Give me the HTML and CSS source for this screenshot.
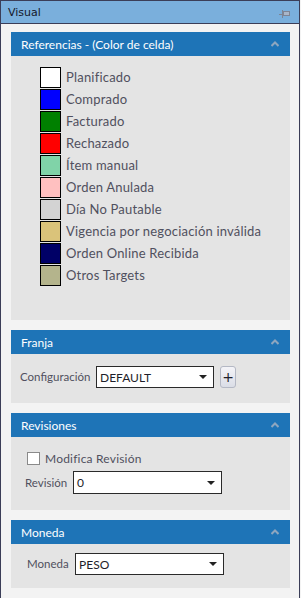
FILE: index.html
```html
<!DOCTYPE html>
<html lang="es">
<head>
  <meta charset="UTF-8">
  <title>Visual</title>
  <link rel="stylesheet" href="styles.css">
</head>
<body>
  <div class="window">
    <div class="titlebar">
      <span>Visual</span>
      <svg class="pin" width="11" height="8" viewBox="0 0 11 8">
        <rect x="0" y="4" width="3" height="1" fill="#7d8494"/>
        <rect x="3" y="0" width="1" height="8" fill="#7d8494"/>
        <rect x="4.5" y="1.5" width="6" height="4" fill="#a9b6c8" stroke="#7d8494" stroke-width="1"/>
      </svg>
    </div>

    <div class="content">
      <section class="panel">
        <div class="panel-head">
          <span>Referencias - (Color de celda)</span>
          <svg class="chev" width="8" height="6" viewBox="0 0 8 6"><path d="M0.5 5 L4 1.5 L7.5 5" fill="none" stroke="#8ea6bf" stroke-width="2"/></svg>
        </div>
        <div class="panel-body legend">
          <div class="item"><span class="sw" style="background:#ffffff"></span>Planificado</div>
          <div class="item"><span class="sw" style="background:#0000ff"></span>Comprado</div>
          <div class="item"><span class="sw" style="background:#008000"></span>Facturado</div>
          <div class="item"><span class="sw" style="background:#ff0000"></span>Rechazado</div>
          <div class="item"><span class="sw" style="background:#80d3a8"></span>Ítem manual</div>
          <div class="item"><span class="sw" style="background:#ffc0c0"></span>Orden Anulada</div>
          <div class="item"><span class="sw" style="background:#d3d3d3"></span>Día No Pautable</div>
          <div class="item"><span class="sw" style="background:#dac37a"></span>Vigencia por negociación inválida</div>
          <div class="item"><span class="sw" style="background:#000066"></span>Orden Online Recibida</div>
          <div class="item"><span class="sw" style="background:#b4b48c"></span>Otros Targets</div>
        </div>
      </section>

      <section class="panel">
        <div class="panel-head">
          <span>Franja</span>
          <svg class="chev" width="8" height="6" viewBox="0 0 8 6"><path d="M0.5 5 L4 1.5 L7.5 5" fill="none" stroke="#8ea6bf" stroke-width="2"/></svg>
        </div>
        <div class="panel-body franja">
          <label class="lbl lbl-config">Configuración</label>
          <div class="select sel-config"><span>DEFAULT</span><i class="caret"></i></div>
          <button class="plus">+</button>
        </div>
      </section>

      <section class="panel">
        <div class="panel-head">
          <span>Revisiones</span>
          <svg class="chev" width="8" height="6" viewBox="0 0 8 6"><path d="M0.5 5 L4 1.5 L7.5 5" fill="none" stroke="#8ea6bf" stroke-width="2"/></svg>
        </div>
        <div class="panel-body revisiones">
          <div class="check-row"><span class="checkbox"></span>Modifica Revisión</div>
          <div class="field-row">
            <label class="lbl lbl-rev">Revisión</label>
            <div class="select sel-rev"><span>0</span><i class="caret"></i></div>
          </div>
        </div>
      </section>

      <section class="panel">
        <div class="panel-head">
          <span>Moneda</span>
          <svg class="chev" width="8" height="6" viewBox="0 0 8 6"><path d="M0.5 5 L4 1.5 L7.5 5" fill="none" stroke="#8ea6bf" stroke-width="2"/></svg>
        </div>
        <div class="panel-body moneda">
          <label class="lbl lbl-moneda">Moneda</label>
          <div class="select sel-moneda"><span>PESO</span><i class="caret"></i></div>
        </div>
      </section>
    </div>
  </div>
</body>
</html>
```

FILE: styles.css
```css
html, body {
  margin: 0;
  padding: 0;
}

body {
  width: 301px;
  height: 598px;
  background: #f3f3f3;
  font-family: Lato, "Noto Sans", sans-serif;
  font-size: 12px;
  color: #50505e;
  overflow: hidden;
}

.window {
  width: 300px;
  height: 598px;
  box-sizing: border-box;
  border-left: 1px solid #3b3e58;
  border-right: 1px solid #3b3e58;
  background: #f3f3f3;
}

.titlebar {
  height: 22px;
  border-top: 1px solid #3b3e58;
  border-bottom: 1px solid #3b3e58;
  background: #7aafdc;
  display: flex;
  align-items: center;
  justify-content: space-between;
  padding: 0 9px 0 7px;
  color: #14182a;
  font-family: "DejaVu Sans", sans-serif;
  font-size: 11px;
}

.pin {
  margin-top: 3px;
}

.content {
  padding: 8px 9px 0 10px;
  display: flex;
  flex-direction: column;
  gap: 10px;
}

.panel-head {
  height: 24px;
  background: #1e74b7;
  color: #ffffff;
  font-size: 12px;
  display: flex;
  align-items: center;
  justify-content: space-between;
  padding: 0 11px 0 10px;
}

.panel-body {
  background: #e4e4e4;
}

.legend {
  height: 264px;
  box-sizing: border-box;
  padding: 10px 0 0 29px;
}

.item {
  display: flex;
  align-items: center;
  height: 22px;
  font-size: 13px;
  letter-spacing: 0.2px;
}

.sw {
  width: 19px;
  height: 19px;
  border: 1px solid #000;
  margin-right: 5px;
}

.franja {
  height: 49px;
  box-sizing: border-box;
  padding: 12px 0 0 9px;
  display: flex;
  align-items: flex-start;
}

.lbl {
  font-size: 11.5px;
  line-height: 22px;
  flex: none;
}

.lbl-config { width: 76px; }
.lbl-rev { width: 48px; line-height: 23px; }
.lbl-moneda { width: 48px; }

.select {
  box-sizing: border-box;
  height: 22px;
  border: 1px solid #2a2a2a;
  background: #fff;
  color: #1e1e2a;
  font-size: 12px;
  display: flex;
  align-items: center;
  justify-content: space-between;
  padding: 0 6px 0 3px;
}

.caret {
  width: 0;
  height: 0;
  border-left: 4px solid transparent;
  border-right: 4px solid transparent;
  border-top: 4px solid #222;
}

.sel-config { width: 118px; }

.plus {
  margin-left: 6px;
  width: 16px;
  height: 22px;
  padding: 0;
  border: 1px solid #b4b8c4;
  border-radius: 3px;
  background: linear-gradient(#f4f4f8, #dadde6);
  color: #1e1e2a;
  font-size: 14px;
  line-height: 18px;
  font-family: "DejaVu Sans", sans-serif;
}

.revisiones {
  height: 73px;
  box-sizing: border-box;
  padding: 15px 0 0 14px;
}

.check-row {
  display: flex;
  align-items: center;
  font-size: 12px;
  letter-spacing: 0.2px;
  height: 13px;
  margin-left: 2px;
}

.checkbox {
  width: 11px;
  height: 11px;
  border: 1px solid #8a8a8a;
  background: #fff;
  margin-right: 5px;
}

.field-row {
  display: flex;
  margin-top: 6px;
}

.sel-rev { width: 149px; height: 23px; }

.moneda {
  height: 44px;
  box-sizing: border-box;
  padding: 9px 0 0 16px;
  display: flex;
  align-items: flex-start;
}

.sel-moneda { width: 149px; }
```
